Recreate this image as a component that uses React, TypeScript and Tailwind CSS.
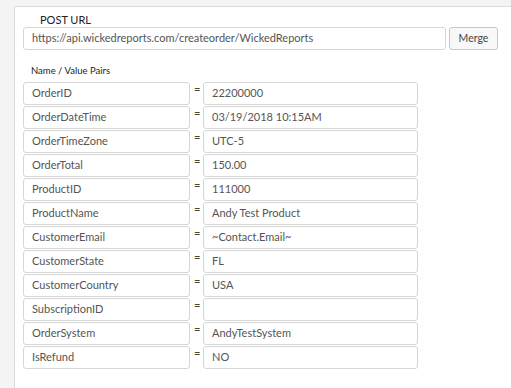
const pairs: [string, string][] = [
  ["OrderID", "22200000"],
  ["OrderDateTime", "03/19/2018 10:15AM"],
  ["OrderTimeZone", "UTC-5"],
  ["OrderTotal", "150.00"],
  ["ProductID", "111000"],
  ["ProductName", "Andy Test Product"],
  ["CustomerEmail", "~Contact.Email~"],
  ["CustomerState", "FL"],
  ["CustomerCountry", "USA"],
  ["SubscriptionID", ""],
  ["OrderSystem", "AndyTestSystem"],
  ["IsRefund", "NO"],
];

export default function App() {
  return (
    <div
      className="h-[388px] bg-[#f4f4f4] pl-[14px] pt-[6px]"
      style={{ fontFamily: "Lato, 'Open Sans', sans-serif" }}
    >
      <div className="h-full border-l border-t border-[#dcdcdc] bg-white pl-[8px]">
        {/* Post URL */}
        <div className="pl-[17px] pt-[5px] text-[11px] leading-[15px] text-[#222]">POST URL</div>
        <div className="flex items-center gap-[3px]">
          <div className="flex h-[23px] w-[423px] items-center rounded-[3px] border border-[#d6d6d6] pl-[8px] text-[11px] text-[#555]">
            https://api.wickedreports.com/createorder/WickedReports
          </div>
          <button className="h-[23px] w-[49px] rounded-[3px] border border-[#c8c8c8] bg-[#f8f8f8] text-[10.5px] text-[#444]">
            Merge
          </button>
        </div>

        {/* Name / Value pairs */}
        <div className="mt-[14px] pl-[8px] text-[9.5px] leading-[13px] text-[#222]">Name / Value Pairs</div>
        <div className="mt-[5px] flex flex-col gap-[1px]">
          {pairs.map(([name, value]) => (
            <div key={name} className="flex items-start">
              <div className="flex h-[23px] w-[167px] items-center rounded-[3px] border border-[#d6d6d6] pl-[8px] text-[11px] text-[#555]">
                {name}
              </div>
              <div className="w-[13px] pl-[4px] pt-[1px] text-[11px] leading-[12px] text-[#444]">=</div>
              <div className="flex h-[23px] w-[215px] items-center rounded-[3px] border border-[#d6d6d6] pl-[8px] text-[11px] text-[#555]">
                {value}
              </div>
            </div>
          ))}
        </div>
      </div>
    </div>
  );
}
